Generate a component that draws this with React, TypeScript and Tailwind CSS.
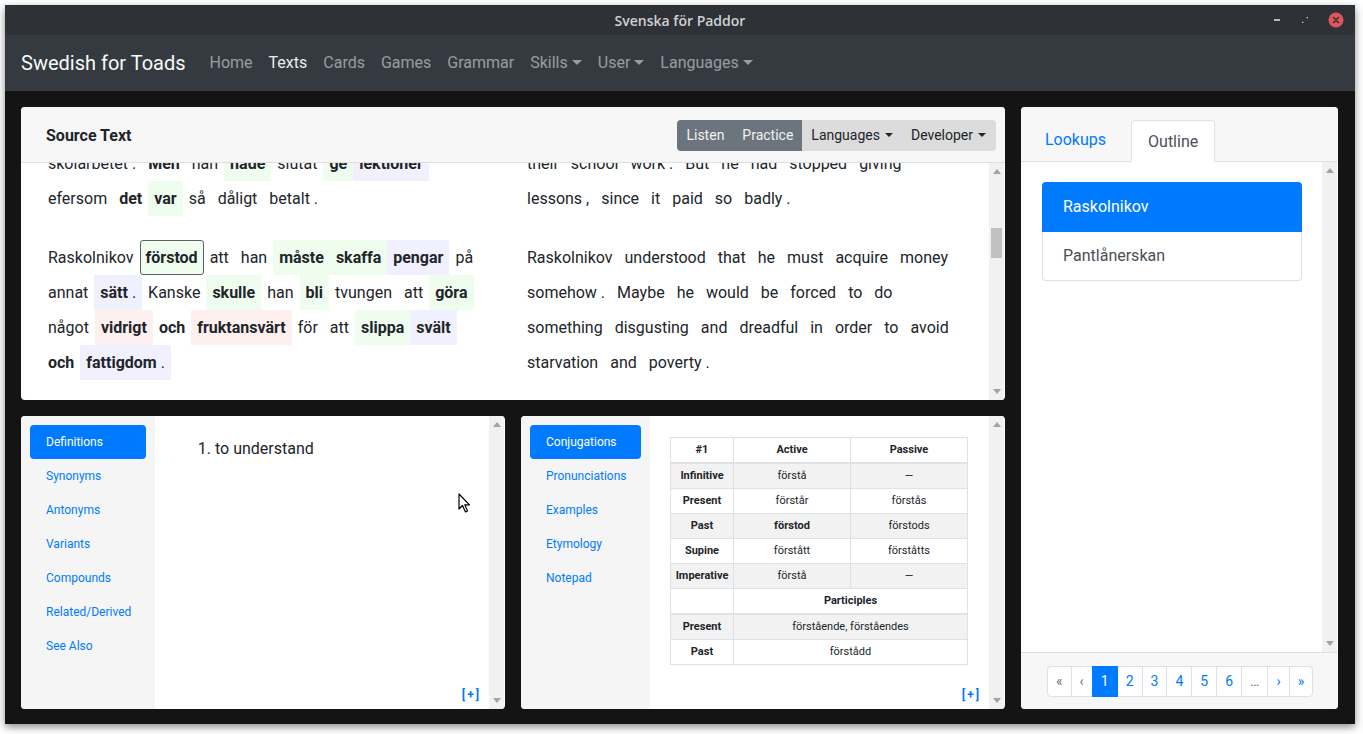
import clsx from "clsx";

// token in the reading text: plain string, or word with weight / highlight
type Tok = { t: string; b?: boolean; bg?: "g" | "l" | "p"; box?: boolean; tail?: string };

const BG = { g: "bg-[#effdef]", l: "bg-[#f0f0fe]", p: "bg-[#fff0f0]" };

const leftP1: (Tok | string)[][] = [
  ["skolarbetet .", { t: "Men", b: true }, "han", { t: "hade", b: true, bg: "g" }, "slutat", { t: "ge", b: true, bg: "g" }, { t: "lektioner", b: true, bg: "l" }],
  ["efersom", { t: "det", b: true }, { t: "var", b: true, bg: "g" }, "så", "dåligt", "betalt ."],
];

const rightP1: (Tok | string)[][] = [
  ["their", "school", "work .", "But", "he", "had", "stopped", "giving"],
  ["lessons ,", "since", "it", "paid", "so", "badly ."],
];

const leftP2: (Tok | string)[][] = [
  ["Raskolnikov", { t: "förstod", b: true, bg: "g", box: true }, "att", "han", { t: "måste", b: true, bg: "g" }, { t: "skaffa", b: true, bg: "g" }, { t: "pengar", b: true, bg: "l" }, "på"],
  ["annat", { t: "sätt", b: true, bg: "l", tail: " ." }, "Kanske", { t: "skulle", b: true, bg: "g" }, "han", { t: "bli", b: true, bg: "g" }, "tvungen", "att", { t: "göra", b: true, bg: "g" }],
  ["något", { t: "vidrigt", b: true, bg: "p" }, { t: "och", b: true }, { t: "fruktansvärt", b: true, bg: "p" }, "för", "att", { t: "slippa", b: true, bg: "g" }, { t: "svält", b: true, bg: "l" }],
  [{ t: "och", b: true }, { t: "fattigdom", b: true, bg: "l", tail: " ." }],
];

const rightP2: (Tok | string)[][] = [
  ["Raskolnikov", "understood", "that", "he", "must", "acquire", "money"],
  ["somehow .", "Maybe", "he", "would", "be", "forced", "to", "do"],
  ["something", "disgusting", "and", "dreadful", "in", "order", "to", "avoid"],
  ["starvation", "and", "poverty ."],
];

function Word({ tok }: { tok: Tok | string }) {
  const w: Tok = typeof tok === "string" ? { t: tok } : tok;
  return (
    <span
      className={clsx(
        "inline-block h-[35px] whitespace-pre text-[#212529]",
        w.box ? "px-[5px] border border-[#5f5f5f] rounded-[3px] leading-[33px]" : "px-1.5 leading-[35px]",
        w.b && "font-bold",
        w.bg && BG[w.bg]
      )}
    >
      {w.t}
      {w.tail && <span className="font-normal">{w.tail}</span>}
    </span>
  );
}

function Lines({ lines }: { lines: (Tok | string)[][] }) {
  return (
    <div>
      {lines.map((line, i) => (
        <div key={i} className="flex h-[35px]">
          {line.map((tok, j) => (
            <Word key={j} tok={tok} />
          ))}
        </div>
      ))}
    </div>
  );
}

function Arrow({ up }: { up?: boolean }) {
  return (
    <svg width="8" height="5" viewBox="0 0 8 5" className="shrink-0">
      <path d={up ? "M0 5 L4 0 L8 5 Z" : "M0 0 L4 5 L8 0 Z"} fill="#a3a3a3" />
    </svg>
  );
}

function Scrollbar({ thumb }: { thumb?: string }) {
  return (
    <div className="relative w-[15px] mr-px shrink-0 bg-[#f1f1f1] flex flex-col items-center justify-between py-[6px]">
      <Arrow up />
      {thumb && <div className={clsx("absolute left-[2px] right-[2px] bg-[#c1c1c1]", thumb)} />}
      <Arrow />
    </div>
  );
}

function Caret({ small }: { small?: boolean }) {
  return (
    <span
      className={clsx(
        "inline-block align-[3px] border-x-transparent border-t-current border-b-0",
        small ? "ml-[5px] border-x-[4px] border-t-[4px]" : "ml-[4px] border-x-[5px] border-t-[5px]"
      )}
    />
  );
}

function TitleBar() {
  return (
    <div className="relative h-[30px] bg-[#2e3136] flex items-center justify-center">
      <span className="font-['Open_Sans',sans-serif] font-semibold text-[14px] text-[#cfd1d3]">Svenska för Paddor</span>
      {/* window controls */}
      <div className="absolute right-[11px] top-[7px] flex items-center gap-[16px]">
        <span className="w-[6px] h-[2px] bg-[#b8babd]" />
        <svg width="14" height="14" viewBox="0 0 14 14" className="ml-[2px]">
          <path d="M8 4 L10 4 L10 6 Z" fill="#b8babd" />
          <path d="M4 8 L4 10 L6 10 Z" fill="#b8babd" />
        </svg>
        <svg width="16" height="16" viewBox="0 0 16 16">
          <circle cx="8" cy="8" r="7.5" fill="#e0545c" />
          <path d="M5.5 5.5 L10.5 10.5 M10.5 5.5 L5.5 10.5" stroke="#2e3136" strokeWidth="1.6" strokeLinecap="round" />
        </svg>
      </div>
    </div>
  );
}

function Navbar() {
  const links: [string, boolean, boolean][] = [
    ["Home", false, false],
    ["Texts", true, false],
    ["Cards", false, false],
    ["Games", false, false],
    ["Grammar", false, false],
    ["Skills", false, true],
    ["User", false, true],
    ["Languages", false, true],
  ];
  return (
    <nav className="h-[56px] bg-[#343a40] flex items-center pl-4">
      <span className="text-[20px] text-[#f8f9fa] mr-4">Swedish for Toads</span>
      <div className="flex items-center">
        {links.map(([label, active, drop]) => (
          <span key={label} className={clsx("px-2 text-base", active ? "text-white/90" : "text-white/50")}>
            {label}
            {drop && <Caret />}
          </span>
        ))}
      </div>
    </nav>
  );
}

function SourceCard() {
  return (
    <div className="h-[293px] bg-white rounded-[4px] overflow-hidden flex flex-col">
      <div className="h-[56px] shrink-0 bg-[#f7f7f7] border-b border-[#dfdfdf] flex items-center justify-between pt-[2px] pl-[25px] pr-[9px]">
        <span className="font-bold text-base text-[#212529]">Source Text</span>
        <div className="flex h-[31px] rounded-[4px] overflow-hidden text-sm leading-[21px]">
          <span className="px-[9px] py-[5px] bg-[#6c757d] text-[#f1f2f3]">Listen</span>
          <span className="px-[9px] py-[5px] bg-[#6c757d] text-[#f1f2f3]">Practice</span>
          <span className="px-[9px] py-[5px] bg-[#dcdcdc] text-[#212529]">
            Languages
            <Caret small />
          </span>
          <span className="pl-[9px] pr-[10px] py-[5px] bg-[#dcdcdc] text-[#212529]">
            Developer
            <Caret small />
          </span>
        </div>
      </div>
      <div className="flex flex-1 min-h-0">
        <div className="flex-1 overflow-hidden pl-[21px] text-base">
          <div className="-mt-[17px] grid grid-cols-[479px_479px] mb-6">
            <Lines lines={leftP1} />
            <Lines lines={rightP1} />
          </div>
          <div className="grid grid-cols-[479px_479px]">
            <Lines lines={leftP2} />
            <Lines lines={rightP2} />
          </div>
        </div>
        <Scrollbar thumb="top-[65px] h-[30px]" />
      </div>
    </div>
  );
}

function SideNav({ items, width }: { items: string[]; width: string }) {
  return (
    <div className={clsx(width, "shrink-0 bg-[#f5f5f5] p-[9px] flex flex-col")}>
      {items.map((it, i) => (
        <span
          key={it}
          className={clsx(
            "h-[34px] leading-[34px] px-4 text-xs rounded-[4px]",
            i === 0 ? "bg-[#007bff] text-white" : "text-[#007bff]"
          )}
        >
          {it}
        </span>
      ))}
    </div>
  );
}

function PlusLink() {
  return <span className="mt-auto self-end mr-[8px] mb-[5px] text-[12px] font-bold tracking-[2px] text-[#007bff]">[+]</span>;
}

function DefinitionsCard() {
  return (
    <div className="relative flex-1 bg-white rounded-[4px] overflow-hidden flex">
      <SideNav width="w-[134px]" items={["Definitions", "Synonyms", "Antonyms", "Variants", "Compounds", "Related/Derived", "See Also"]} />
      <div className="flex-1 flex flex-col pl-5 pt-[21px]">
        <ol className="list-decimal pl-10 text-base leading-6 text-[#212529]">
          <li>to understand</li>
        </ol>
        <PlusLink />
      </div>
      <Scrollbar />
      {/* mouse pointer */}
      <svg width="14" height="21" viewBox="0 0 14 21" className="absolute left-[437px] top-[77px]">
        <path d="M1 1 L1 16 L4.5 12.5 L7.5 19 L9.5 18 L6.8 11.8 L11.5 11.8 Z" fill="#fff" stroke="#000" strokeWidth="1.2" strokeLinejoin="round" />
      </svg>
    </div>
  );
}

const conj: [string, string, string, boolean?][] = [
  ["Infinitive", "förstå", "—"],
  ["Present", "förstår", "förstås"],
  ["Past", "förstod", "förstods", true],
  ["Supine", "förstått", "förstått" + "s"],
  ["Imperative", "förstå", "—"],
];

function ConjugationsCard() {
  const cell = "border border-[#dee2e6] px-1 py-1 leading-[16px] text-center";
  return (
    <div className="flex-1 bg-white rounded-[4px] overflow-hidden flex">
      <SideNav width="w-[129px]" items={["Conjugations", "Pronunciations", "Examples", "Etymology", "Notepad"]} />
      <div className="flex-1 flex flex-col pl-5 pt-[21px]">
        <table className="w-[297px] table-fixed border-collapse text-[11px] text-[#212529]">
          <colgroup>
            <col className="w-[63px]" />
            <col className="w-[117px]" />
            <col className="w-[117px]" />
          </colgroup>
          <thead>
            <tr>
              <th className={clsx(cell, "border-b-2")}>#1</th>
              <th className={clsx(cell, "border-b-2")}>Active</th>
              <th className={clsx(cell, "border-b-2")}>Passive</th>
            </tr>
          </thead>
          <tbody>
            {conj.map(([k, a, p, bold], i) => (
              <tr key={k} className={i % 2 === 0 ? "bg-[#f2f2f2]" : ""}>
                <th className={cell}>{k}</th>
                <td className={clsx(cell, bold && "font-bold")}>{a}</td>
                <td className={cell}>{p}</td>
              </tr>
            ))}
            <tr>
              <th className={clsx(cell, "border-b-2")}></th>
              <th colSpan={2} className={clsx(cell, "border-b-2")}>
                Participles
              </th>
            </tr>
            <tr className="bg-[#f2f2f2]">
              <th className={cell}>Present</th>
              <td colSpan={2} className={cell}>
                förstående, förståendes
              </td>
            </tr>
            <tr>
              <th className={cell}>Past</th>
              <td colSpan={2} className={cell}>
                förstådd
              </td>
            </tr>
          </tbody>
        </table>
        <PlusLink />
      </div>
      <Scrollbar />
    </div>
  );
}

function OutlineCard() {
  const pages = ["«", "‹", "1", "2", "3", "4", "5", "6", "…", "›", "»"];
  return (
    <div className="flex-1 bg-white rounded-[4px] overflow-hidden flex flex-col">
      <div className="h-[55px] shrink-0 bg-[#f7f7f7] border-b border-[#dee2e6] flex items-end pl-2">
        <span className="h-[41px] leading-[40px] px-4 text-base text-[#007bff]">Lookups</span>
        <span className="ml-[9px] -mb-px h-[42px] leading-[40px] pt-px px-4 text-base text-[#495057] bg-white border border-b-0 border-[#dee2e6] rounded-t-[4px]">
          Outline
        </span>
      </div>
      <div className="flex flex-1 min-h-0">
        <div className="flex-1 pl-[21px] pt-[20px]">
          <div className="w-[260px] flex flex-col text-base">
            <span className="h-[50px] leading-[50px] px-[21px] bg-[#007bff] text-white rounded-t-[4px]">Raskolnikov</span>
            <span className="h-[49px] leading-[48px] px-5 text-[#495057] border border-t-0 border-[#dee2e6] rounded-b-[4px]">
              Pantlånerskan
            </span>
          </div>
        </div>
        <Scrollbar />
      </div>
      <div className="h-[57px] shrink-0 bg-[#f7f7f7] border-t border-[#dee2e6] flex items-center pl-[26px]">
        <div className="flex text-sm leading-[21px]">
          {pages.map((p, i) => (
            <span
              key={i}
              className={clsx(
                "px-2 py-1 border",
                i > 0 && "-ml-px",
                i === 0 && "rounded-l-[4px]",
                i === pages.length - 1 && "rounded-r-[4px]",
                p === "1"
                  ? "relative bg-[#007bff] border-[#007bff] text-white"
                  : "bg-white border-[#dee2e6]",
                p !== "1" && (["«", "‹", "…"].includes(p) ? "text-[#6c757d]" : "text-[#007bff]")
              )}
            >
              {p}
            </span>
          ))}
        </div>
      </div>
    </div>
  );
}

export default function App() {
  return (
    <div className="w-[1363px] h-[734px] bg-white overflow-hidden font-['Roboto',sans-serif]">
      <div className="ml-[5px] mt-[5px] w-[1350px] h-[719px] flex flex-col shadow-[0_3px_8px_rgba(0,0,0,0.45)]">
        <TitleBar />
        <Navbar />
        <main className="flex-1 bg-[#141414] pt-4 pb-[15px] pl-4 pr-[17px] flex gap-4">
          <div className="w-[984px] flex flex-col gap-4">
            <SourceCard />
            <div className="flex-1 flex gap-4">
              <DefinitionsCard />
              <ConjugationsCard />
            </div>
          </div>
          <OutlineCard />
        </main>
      </div>
    </div>
  );
}
